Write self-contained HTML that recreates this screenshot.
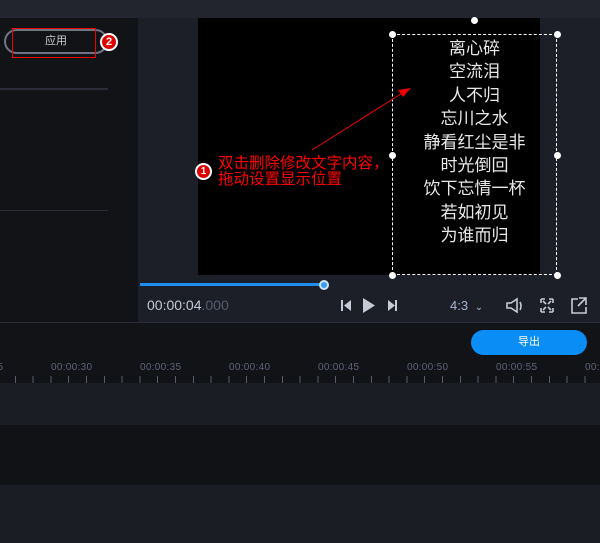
<!DOCTYPE html>
<html><head><meta charset="utf-8"><style>
html,body{margin:0;width:600px;height:543px;overflow:hidden}
body{background:#121317;font-family:"Liberation Sans","Noto Sans CJK SC",sans-serif;position:relative}
div{position:absolute;box-sizing:border-box}
.ln{left:0;right:0;text-align:center;color:#e8e8e8;font-size:17px;line-height:23.4px}
.h{width:7px;height:7px;border-radius:50%;background:#fff}
.tl{color:#5d6478;font-size:10px;top:362px;letter-spacing:0.3px;white-space:nowrap}
</style></head><body>
<div style="left:0;top:0;width:600px;height:543px;overflow:hidden">
<div style="left:0;top:0;width:600px;height:18px;background:#22252e"></div>
<div style="left:0;top:18px;width:138px;height:304px;background:#121317"></div>
<div style="left:138px;top:18px;width:462px;height:304px;background:#1c1f28"></div>
<div style="left:198px;top:18px;width:342px;height:257px;background:#000"></div>
<div style="left:0;top:88px;width:108px;height:2px;background:#2a2d36"></div>
<div style="left:0;top:210px;width:108px;height:1px;background:#2a2d36"></div>
<div style="left:4px;top:29px;width:104px;height:25px;border:2px solid #6f7485;border-radius:13px;color:#ccc;font-size:11px;text-align:center;line-height:21px">应用</div>
<div style="left:12px;top:28px;width:84px;height:30px;border:1px solid #e00"></div>
<div style="left:100px;top:33px;width:18px;height:18px;border-radius:50%;background:#d00;border:2px solid #fff;color:#fff;font-size:11px;font-weight:bold;text-align:center;line-height:14px">2</div>
<div style="left:392px;top:34px;width:165px;height:241px;border:1px dashed #fff"></div>
<div style="left:392px;top:37px;width:165px">
<div class="ln" style="position:relative">离心碎</div><div class="ln" style="position:relative">空流泪</div><div class="ln" style="position:relative">人不归</div><div class="ln" style="position:relative">忘川之水</div><div class="ln" style="position:relative">静看红尘是非</div><div class="ln" style="position:relative">时光倒回</div><div class="ln" style="position:relative">饮下忘情一杯</div><div class="ln" style="position:relative">若如初见</div><div class="ln" style="position:relative">为谁而归</div></div>
<div class="h" style="left:389px;top:31px"></div><div class="h" style="left:554px;top:31px"></div>
<div class="h" style="left:389px;top:152px"></div><div class="h" style="left:554px;top:152px"></div>
<div class="h" style="left:389px;top:272px"></div><div class="h" style="left:554px;top:272px"></div>
<div class="h" style="left:471px;top:17px"></div>
<svg style="position:absolute;left:0;top:0" width="600" height="543"><line x1="312" y1="150" x2="404" y2="92" stroke="#e00" stroke-width="1"/><polygon points="411,88 398,90 403,97" fill="#e00"/></svg>
<div style="left:195px;top:163px;width:17px;height:17px;border-radius:50%;background:#d00;border:2px solid #fff;color:#fff;font-size:10px;font-weight:bold;text-align:center;line-height:13px">1</div>
<div style="left:218px;top:156px;color:#f00;font-size:15.5px;line-height:16px;white-space:nowrap">双击删除修改文字内容，<br>拖动设置显示位置</div>
<div style="left:140px;top:283px;width:184px;height:3px;background:#1e8ef0"></div>
<div style="left:319px;top:280px;width:10px;height:10px;border-radius:50%;background:#3a9df5;border:2px solid #cfe4fb"></div>
<div style="left:147px;top:297px;font-size:14px;color:#c6cad6">00:00:04<span style="color:#555b6c">.000</span></div>
<svg style="position:absolute;left:338px;top:297px" width="60" height="18"><rect x="3" y="3" width="2" height="11" fill="#c6cad6"/><polygon points="13,3 13,14 6,8.5" fill="#c6cad6"/><polygon points="25,1 25,16 37,8.5" fill="#c6cad6"/><polygon points="50,3 50,14 57,8.5" fill="#c6cad6"/><rect x="57" y="3" width="2" height="11" fill="#c6cad6"/></svg>
<div style="left:450px;top:298px;font-size:13px;color:#a8b4d0">4:3 <span style="font-size:10px;margin-left:3px">⌄</span></div>
<svg style="position:absolute;left:505px;top:296px" width="85" height="20" fill="none" stroke="#c6cad6" stroke-width="1.6"><path d="M2 7h4l6-4v13l-6-4H2z"/><path d="M15 6q2 4 0 8"/><path d="M36 3h4M36 3v4M48 3h-4M48 3v4M36 16h4M36 16v-4M48 16h-4M48 16v-4M38 5l3 3M46 5l-3 3M38 14l3-3M46 14l-3-3"/><path d="M73 3h-6v14h14v-6M74 2h7v7M81 2l-8 8"/></svg>
<div style="left:0;top:322px;width:600px;height:1px;background:#2a2d36"></div>
<div style="left:471px;top:330px;width:116px;height:25px;border-radius:13px;background:#0a8ef5;color:#fff;font-size:11px;text-align:center;line-height:25px">导出</div>
<div style="left:0;top:356px;width:600px;height:18px;overflow:hidden">
<div class="tl" style="left:-38px;top:6px">00:00:25</div>
<div class="tl" style="left:51px;top:6px">00:00:30</div><div class="tl" style="left:140px;top:6px">00:00:35</div><div class="tl" style="left:229px;top:6px">00:00:40</div><div class="tl" style="left:318px;top:6px">00:00:45</div><div class="tl" style="left:407px;top:6px">00:00:50</div><div class="tl" style="left:496px;top:6px">00:00:55</div><div class="tl" style="left:585px;top:6px">00:01:00</div>
</div>
<div style="left:0;top:373px;width:600px;height:10px;background:repeating-linear-gradient(90deg,transparent 0 15.8px,#5d6478 15.8px 16.8px,transparent 16.8px 17.8px);background-position:-1px 0;opacity:.9;clip-path:inset(3px 0 0 0)"></div>
<div style="left:0;top:383px;width:600px;height:42px;background:#1b1d25"></div>
<div style="left:0;top:425px;width:600px;height:60px;background:#111216"></div>
<div style="left:0;top:485px;width:600px;height:58px;background:#1b1d25"></div>
</div>
</body></html>
